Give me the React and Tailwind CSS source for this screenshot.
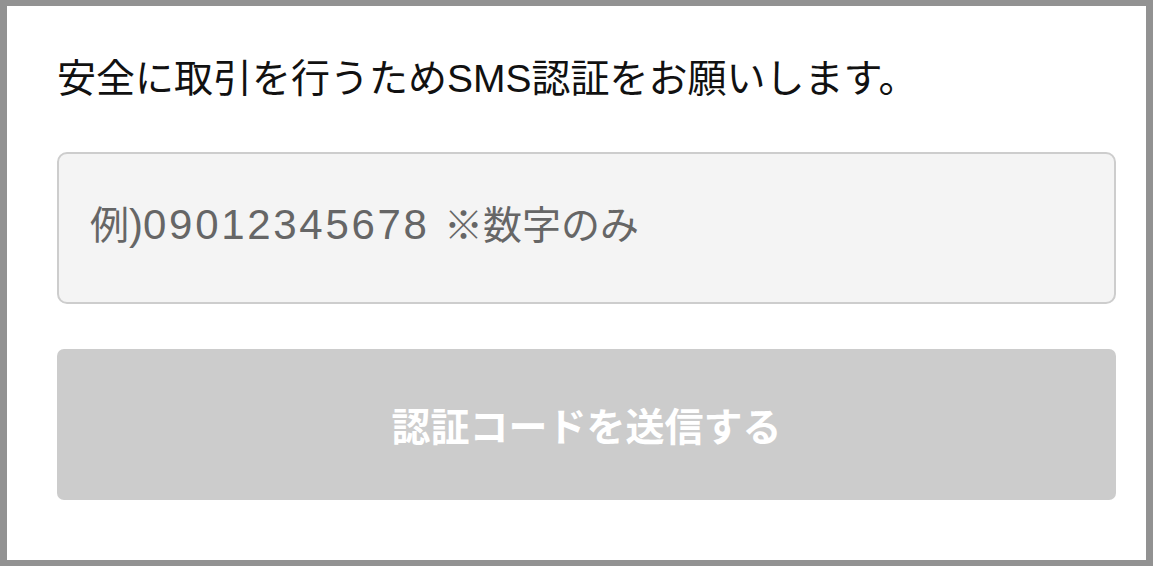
export default function App() {
  const font = { fontFamily: '"Liberation Sans", "Noto Sans CJK JP", sans-serif' };
  return (
    <div className="w-[1153px] h-[566px] bg-[#929292] pt-[6px] pb-[6px] pl-[7px] pr-[7px]" style={font}>
      <div className="h-full bg-white pl-[50px] pr-[30px] pt-[44px] flex flex-col">
        <p className="text-[39px] leading-[58px] text-[#111] whitespace-nowrap">
          安全に取引を行うためSMS認証をお願いします。
        </p>
        <div className="mt-[44px] h-[152px] rounded-[10px] border-[2.5px] border-[#cdcdcd] bg-[#f4f4f4] flex items-center pl-[31px] pb-[6px]">
          <span className="text-[39px] leading-none text-[#666] whitespace-nowrap">
            例<span className="text-[42px]">)</span>
            <span className="text-[42px] tracking-[2.7px]">09012345678 </span>※数字のみ
          </span>
        </div>
        <button className="mt-[45px] h-[151px] rounded-[7px] bg-[#cccccc] flex items-center justify-center">
          <span className="text-[39px] font-bold leading-none text-white" style={{ fontFamily: '"Noto Sans CJK JP", sans-serif' }}>
            認証コードを送信する
          </span>
        </button>
      </div>
    </div>
  );
}
